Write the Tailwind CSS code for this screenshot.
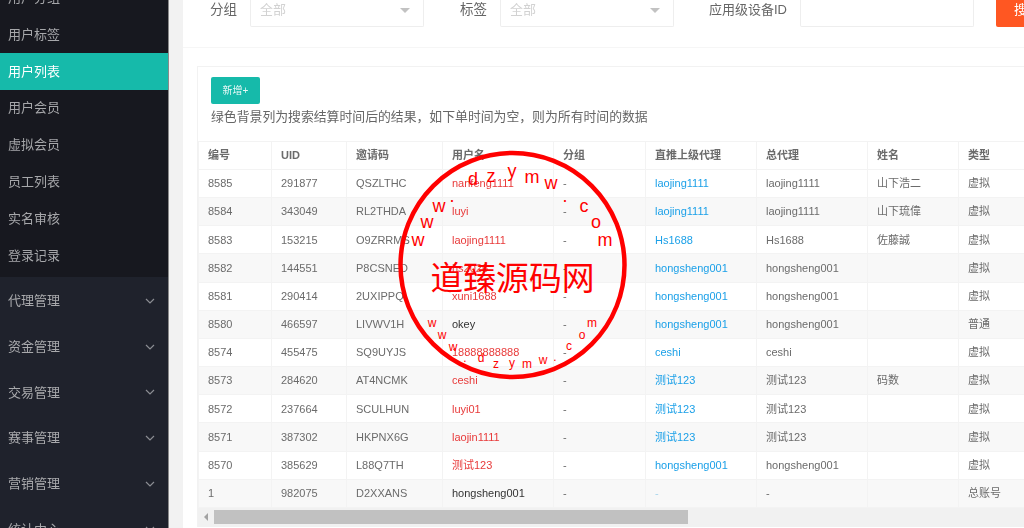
<!doctype html>
<html lang="zh">
<head>
<meta charset="utf-8">
<script src="https://cdn.jsdelivr.net/npm/@tailwindcss/browser@4"></script>
</head>
<body class="m-0 overflow-hidden bg-white">
<div class="relative w-[1024px] h-[528px] overflow-hidden flex font-['Liberation_Sans','Noto_Sans_CJK_SC',sans-serif]">
  <!-- sidebar -->
  <aside class="w-[169px] h-full shrink-0 bg-[#1f222c] border-r border-[#8a8a8a] text-[13px] flex flex-col overflow-hidden blur-[0.4px]">
    <div class="bg-[#17181f] mt-[-20.6px] pb-[3.4px] flex flex-col text-[#a6a7aa]">
      <a class="h-[36.8px] flex items-center pl-[8px]">用户分组</a>
      <a class="h-[36.8px] flex items-center pl-[8px]">用户标签</a>
      <a class="h-[36.8px] flex items-center pl-[8px] bg-[#16baaa] text-white">用户列表</a>
      <a class="h-[36.8px] flex items-center pl-[8px]">用户会员</a>
      <a class="h-[36.8px] flex items-center pl-[8px]">虚拟会员</a>
      <a class="h-[36.8px] flex items-center pl-[8px]">员工列表</a>
      <a class="h-[36.8px] flex items-center pl-[8px]">实名审核</a>
      <a class="h-[36.8px] flex items-center pl-[8px]">登录记录</a>
    </div>
    <div class="flex flex-col text-[#a9aaad] pt-[1px]">
      <a class="h-[45.7px] shrink-0 flex items-center justify-between pl-[8px] pr-[13px]">代理管理<svg class="w-[10px] h-[6px]" viewBox="0 0 10 6" fill="none" stroke="#8b8d93" stroke-width="1.2"><path d="M1 1l4 4 4-4"/></svg></a>
      <a class="h-[45.7px] shrink-0 flex items-center justify-between pl-[8px] pr-[13px]">资金管理<svg class="w-[10px] h-[6px]" viewBox="0 0 10 6" fill="none" stroke="#8b8d93" stroke-width="1.2"><path d="M1 1l4 4 4-4"/></svg></a>
      <a class="h-[45.7px] shrink-0 flex items-center justify-between pl-[8px] pr-[13px]">交易管理<svg class="w-[10px] h-[6px]" viewBox="0 0 10 6" fill="none" stroke="#8b8d93" stroke-width="1.2"><path d="M1 1l4 4 4-4"/></svg></a>
      <a class="h-[45.7px] shrink-0 flex items-center justify-between pl-[8px] pr-[13px]">赛事管理<svg class="w-[10px] h-[6px]" viewBox="0 0 10 6" fill="none" stroke="#8b8d93" stroke-width="1.2"><path d="M1 1l4 4 4-4"/></svg></a>
      <a class="h-[45.7px] shrink-0 flex items-center justify-between pl-[8px] pr-[13px]">营销管理<svg class="w-[10px] h-[6px]" viewBox="0 0 10 6" fill="none" stroke="#8b8d93" stroke-width="1.2"><path d="M1 1l4 4 4-4"/></svg></a>
      <a class="h-[45.7px] shrink-0 flex items-center justify-between pl-[8px] pr-[13px]">统计中心<svg class="w-[10px] h-[6px]" viewBox="0 0 10 6" fill="none" stroke="#8b8d93" stroke-width="1.2"><path d="M1 1l4 4 4-4"/></svg></a>
    </div>
  </aside>
  <div class="w-[14px] shrink-0 bg-[#f2f2f2]"></div>
  <!-- main -->
  <main class="w-[841px] shrink-0 bg-white overflow-hidden blur-[0.4px]">
    <div class="h-[48px] border-b border-[#f6f6f6] flex items-start text-[13.5px] text-[#666]">
      <div class="ml-[27px] w-[40px] shrink-0 h-[20px] flex items-center">分组</div>
      <div class="w-[174px] shrink-0 h-[27px] border border-t-0 border-[#eee] rounded-b-[2px] flex items-start justify-between pl-[9px] pr-[13px] text-[13px] text-[#d2d2d2]"><span class="leading-[20px]">全部</span><span class="mt-[8px] w-0 h-0 border-x-[5px] border-x-transparent border-t-[5px] border-t-[#c2c2c2]"></span></div>
      <div class="ml-[36px] w-[40px] shrink-0 h-[20px] flex items-center">标签</div>
      <div class="w-[174px] shrink-0 h-[27px] border border-t-0 border-[#eee] rounded-b-[2px] flex items-start justify-between pl-[9px] pr-[13px] text-[13px] text-[#d2d2d2]"><span class="leading-[20px]">全部</span><span class="mt-[8px] w-0 h-0 border-x-[5px] border-x-transparent border-t-[5px] border-t-[#c2c2c2]"></span></div>
      <div class="ml-[35px] w-[91px] shrink-0 h-[20px] flex items-center whitespace-nowrap text-[13px]">应用级设备ID</div>
      <div class="w-[174px] shrink-0 h-[27px] border border-t-0 border-[#eee] rounded-b-[2px]"></div>
      <div class="ml-[22px] w-[60px] shrink-0 h-[27px] bg-[#ff5722] rounded-b-[2px] text-white text-[13px] pl-[18px] leading-[20px] whitespace-nowrap">搜索</div>
    </div>
    <div class="ml-[14px] mt-[18px] border-t border-l border-[#f2f2f2] w-[900px]">
      <div class="h-[74px] pl-[13px] pt-[10px]">
        <div class="w-[49px] h-[27px] bg-[#16baaa] rounded-[2px] text-white/90 text-[10px] flex items-center justify-center">新增+</div>
        <p class="mt-[3px] text-[12.85px] leading-[20px] text-[#666] whitespace-nowrap">绿色背景列为搜索结算时间后的结果，如下单时间为空，则为所有时间的数据</p>
      </div>
      <table class="border-collapse table-fixed w-[900px] text-[11px] text-[#6b6b6b]">
        <colgroup><col class="w-[73px]"><col class="w-[75px]"><col class="w-[96px]"><col class="w-[111px]"><col class="w-[92px]"><col class="w-[111px]"><col class="w-[111px]"><col class="w-[91px]"><col class="w-[140px]"></colgroup>
        <thead>
          <tr class="h-[28px] text-[#6b6b6b]">
            <th class="border border-[#f3f3f3] pl-[9px] text-left font-semibold">编号</th>
            <th class="border border-[#f3f3f3] pl-[9px] text-left font-semibold">UID</th>
            <th class="border border-[#f3f3f3] pl-[9px] text-left font-semibold">邀请码</th>
            <th class="border border-[#f3f3f3] pl-[9px] text-left font-semibold">用户名</th>
            <th class="border border-[#f3f3f3] pl-[9px] text-left font-semibold">分组</th>
            <th class="border border-[#f3f3f3] pl-[9px] text-left font-semibold">直推上级代理</th>
            <th class="border border-[#f3f3f3] pl-[9px] text-left font-semibold">总代理</th>
            <th class="border border-[#f3f3f3] pl-[9px] text-left font-semibold">姓名</th>
            <th class="border border-[#f3f3f3] pl-[9px] text-left font-semibold">类型</th>
          </tr>
        </thead>
        <tbody>
          <tr class="h-[28.17px]"><td class="border border-[#f3f3f3] pl-[9px]">8585</td><td class="border border-[#f3f3f3] pl-[9px]">291877</td><td class="border border-[#f3f3f3] pl-[9px]">QSZLTHC</td><td class="border border-[#f3f3f3] pl-[9px] text-[#e83a3a]">nanfeng1111</td><td class="border border-[#f3f3f3] pl-[9px]">-</td><td class="border border-[#f3f3f3] pl-[9px] text-[#1ba0e8]">laojing1111</td><td class="border border-[#f3f3f3] pl-[9px]">laojing1111</td><td class="border border-[#f3f3f3] pl-[9px]">山下浩二</td><td class="border border-[#f3f3f3] pl-[9px]">虚拟</td></tr>
          <tr class="h-[28.17px] bg-[#f8f8f8]"><td class="border border-[#f3f3f3] pl-[9px]">8584</td><td class="border border-[#f3f3f3] pl-[9px]">343049</td><td class="border border-[#f3f3f3] pl-[9px]">RL2THDA</td><td class="border border-[#f3f3f3] pl-[9px] text-[#e83a3a]">luyi</td><td class="border border-[#f3f3f3] pl-[9px]">-</td><td class="border border-[#f3f3f3] pl-[9px] text-[#1ba0e8]">laojing1111</td><td class="border border-[#f3f3f3] pl-[9px]">laojing1111</td><td class="border border-[#f3f3f3] pl-[9px]">山下琉偉</td><td class="border border-[#f3f3f3] pl-[9px]">虚拟</td></tr>
          <tr class="h-[28.17px]"><td class="border border-[#f3f3f3] pl-[9px]">8583</td><td class="border border-[#f3f3f3] pl-[9px]">153215</td><td class="border border-[#f3f3f3] pl-[9px]">O9ZRRMS</td><td class="border border-[#f3f3f3] pl-[9px] text-[#e83a3a]">laojing1111</td><td class="border border-[#f3f3f3] pl-[9px]">-</td><td class="border border-[#f3f3f3] pl-[9px] text-[#1ba0e8]">Hs1688</td><td class="border border-[#f3f3f3] pl-[9px]">Hs1688</td><td class="border border-[#f3f3f3] pl-[9px]">佐藤誠</td><td class="border border-[#f3f3f3] pl-[9px]">虚拟</td></tr>
          <tr class="h-[28.17px] bg-[#f8f8f8]"><td class="border border-[#f3f3f3] pl-[9px]">8582</td><td class="border border-[#f3f3f3] pl-[9px]">144551</td><td class="border border-[#f3f3f3] pl-[9px]">P8CSNED</td><td class="border border-[#f3f3f3] pl-[9px] text-[#e83a3a]">hs2026</td><td class="border border-[#f3f3f3] pl-[9px]">-</td><td class="border border-[#f3f3f3] pl-[9px] text-[#1ba0e8]">hongsheng001</td><td class="border border-[#f3f3f3] pl-[9px]">hongsheng001</td><td class="border border-[#f3f3f3] pl-[9px]"></td><td class="border border-[#f3f3f3] pl-[9px]">虚拟</td></tr>
          <tr class="h-[28.17px]"><td class="border border-[#f3f3f3] pl-[9px]">8581</td><td class="border border-[#f3f3f3] pl-[9px]">290414</td><td class="border border-[#f3f3f3] pl-[9px]">2UXIPPQ</td><td class="border border-[#f3f3f3] pl-[9px] text-[#e83a3a]">xuni1688</td><td class="border border-[#f3f3f3] pl-[9px]">-</td><td class="border border-[#f3f3f3] pl-[9px] text-[#1ba0e8]">hongsheng001</td><td class="border border-[#f3f3f3] pl-[9px]">hongsheng001</td><td class="border border-[#f3f3f3] pl-[9px]"></td><td class="border border-[#f3f3f3] pl-[9px]">虚拟</td></tr>
          <tr class="h-[28.17px] bg-[#f8f8f8]"><td class="border border-[#f3f3f3] pl-[9px]">8580</td><td class="border border-[#f3f3f3] pl-[9px]">466597</td><td class="border border-[#f3f3f3] pl-[9px]">LIVWV1H</td><td class="border border-[#f3f3f3] pl-[9px] text-[#333]">okey</td><td class="border border-[#f3f3f3] pl-[9px]">-</td><td class="border border-[#f3f3f3] pl-[9px] text-[#1ba0e8]">hongsheng001</td><td class="border border-[#f3f3f3] pl-[9px]">hongsheng001</td><td class="border border-[#f3f3f3] pl-[9px]"></td><td class="border border-[#f3f3f3] pl-[9px]">普通</td></tr>
          <tr class="h-[28.17px]"><td class="border border-[#f3f3f3] pl-[9px]">8574</td><td class="border border-[#f3f3f3] pl-[9px]">455475</td><td class="border border-[#f3f3f3] pl-[9px]">SQ9UYJS</td><td class="border border-[#f3f3f3] pl-[9px] text-[#e83a3a]">18888888888</td><td class="border border-[#f3f3f3] pl-[9px]">-</td><td class="border border-[#f3f3f3] pl-[9px] text-[#1ba0e8]">ceshi</td><td class="border border-[#f3f3f3] pl-[9px]">ceshi</td><td class="border border-[#f3f3f3] pl-[9px]"></td><td class="border border-[#f3f3f3] pl-[9px]">虚拟</td></tr>
          <tr class="h-[28.17px] bg-[#f8f8f8]"><td class="border border-[#f3f3f3] pl-[9px]">8573</td><td class="border border-[#f3f3f3] pl-[9px]">284620</td><td class="border border-[#f3f3f3] pl-[9px]">AT4NCMK</td><td class="border border-[#f3f3f3] pl-[9px] text-[#e83a3a]">ceshi</td><td class="border border-[#f3f3f3] pl-[9px]">-</td><td class="border border-[#f3f3f3] pl-[9px] text-[#1ba0e8]">测试123</td><td class="border border-[#f3f3f3] pl-[9px]">测试123</td><td class="border border-[#f3f3f3] pl-[9px]">码数</td><td class="border border-[#f3f3f3] pl-[9px]">虚拟</td></tr>
          <tr class="h-[28.17px]"><td class="border border-[#f3f3f3] pl-[9px]">8572</td><td class="border border-[#f3f3f3] pl-[9px]">237664</td><td class="border border-[#f3f3f3] pl-[9px]">SCULHUN</td><td class="border border-[#f3f3f3] pl-[9px] text-[#e83a3a]">luyi01</td><td class="border border-[#f3f3f3] pl-[9px]">-</td><td class="border border-[#f3f3f3] pl-[9px] text-[#1ba0e8]">测试123</td><td class="border border-[#f3f3f3] pl-[9px]">测试123</td><td class="border border-[#f3f3f3] pl-[9px]"></td><td class="border border-[#f3f3f3] pl-[9px]">虚拟</td></tr>
          <tr class="h-[28.17px] bg-[#f8f8f8]"><td class="border border-[#f3f3f3] pl-[9px]">8571</td><td class="border border-[#f3f3f3] pl-[9px]">387302</td><td class="border border-[#f3f3f3] pl-[9px]">HKPNX6G</td><td class="border border-[#f3f3f3] pl-[9px] text-[#e83a3a]">laojin1111</td><td class="border border-[#f3f3f3] pl-[9px]">-</td><td class="border border-[#f3f3f3] pl-[9px] text-[#1ba0e8]">测试123</td><td class="border border-[#f3f3f3] pl-[9px]">测试123</td><td class="border border-[#f3f3f3] pl-[9px]"></td><td class="border border-[#f3f3f3] pl-[9px]">虚拟</td></tr>
          <tr class="h-[28.17px]"><td class="border border-[#f3f3f3] pl-[9px]">8570</td><td class="border border-[#f3f3f3] pl-[9px]">385629</td><td class="border border-[#f3f3f3] pl-[9px]">L88Q7TH</td><td class="border border-[#f3f3f3] pl-[9px] text-[#e83a3a]">测试123</td><td class="border border-[#f3f3f3] pl-[9px]">-</td><td class="border border-[#f3f3f3] pl-[9px] text-[#1ba0e8]">hongsheng001</td><td class="border border-[#f3f3f3] pl-[9px]">hongsheng001</td><td class="border border-[#f3f3f3] pl-[9px]"></td><td class="border border-[#f3f3f3] pl-[9px]">虚拟</td></tr>
          <tr class="h-[28.17px] bg-[#f8f8f8]"><td class="border border-[#f3f3f3] pl-[9px]">1</td><td class="border border-[#f3f3f3] pl-[9px]">982075</td><td class="border border-[#f3f3f3] pl-[9px]">D2XXANS</td><td class="border border-[#f3f3f3] pl-[9px] text-[#333]">hongsheng001</td><td class="border border-[#f3f3f3] pl-[9px]">-</td><td class="border border-[#f3f3f3] pl-[9px] text-[#a9d5ec]">-</td><td class="border border-[#f3f3f3] pl-[9px]">-</td><td class="border border-[#f3f3f3] pl-[9px]"></td><td class="border border-[#f3f3f3] pl-[9px]">总账号</td></tr>
        </tbody>
      </table>
      <div class="h-[19px] bg-[#f1f1f1] flex items-center">
        <span class="ml-[6px] w-0 h-0 border-y-[4px] border-y-transparent border-r-[4px] border-r-[#a3a3a3]"></span>
        <div class="ml-[6px] w-[474px] h-[14px] bg-[#c1c1c1]"></div>
      </div>
    </div>
  </main>
  <!-- watermark stamp -->
  <svg class="absolute left-0 top-0 pointer-events-none" width="1024" height="528" viewBox="0 0 1024 528" fill="#f00" text-anchor="middle" font-family="'Liberation Sans',sans-serif">
    <circle cx="512.500" cy="265" r="112" fill="none" stroke="#f00" stroke-width="4.500"/>
    <g font-size="18">
      <text x="418" y="246">w</text><text x="427" y="228">w</text><text x="439" y="212">w</text><text x="452" y="202">.</text>
      <text x="473" y="185">d</text><text x="491" y="182">z</text><text x="512" y="177">y</text><text x="532" y="183">m</text><text x="551" y="189">w</text><text x="565" y="202">.</text>
      <text x="584" y="212">c</text><text x="596" y="228">o</text><text x="605" y="246">m</text>
    </g>
    <g font-size="12">
      <text x="432" y="327">w</text><text x="442" y="339">w</text><text x="453" y="351">w</text><text x="465" y="362">.</text>
      <text x="481" y="362">d</text><text x="496" y="368">z</text><text x="512" y="367">y</text><text x="527" y="368">m</text><text x="543" y="364">w</text><text x="555" y="361">.</text>
      <text x="569" y="350">c</text><text x="582" y="339">o</text><text x="592" y="327">m</text>
    </g>
    <text x="512.500" y="290" font-size="32.800" font-family="'Noto Sans CJK SC',sans-serif">道臻源码网</text>
  </svg>
</div>
</body>
</html>
